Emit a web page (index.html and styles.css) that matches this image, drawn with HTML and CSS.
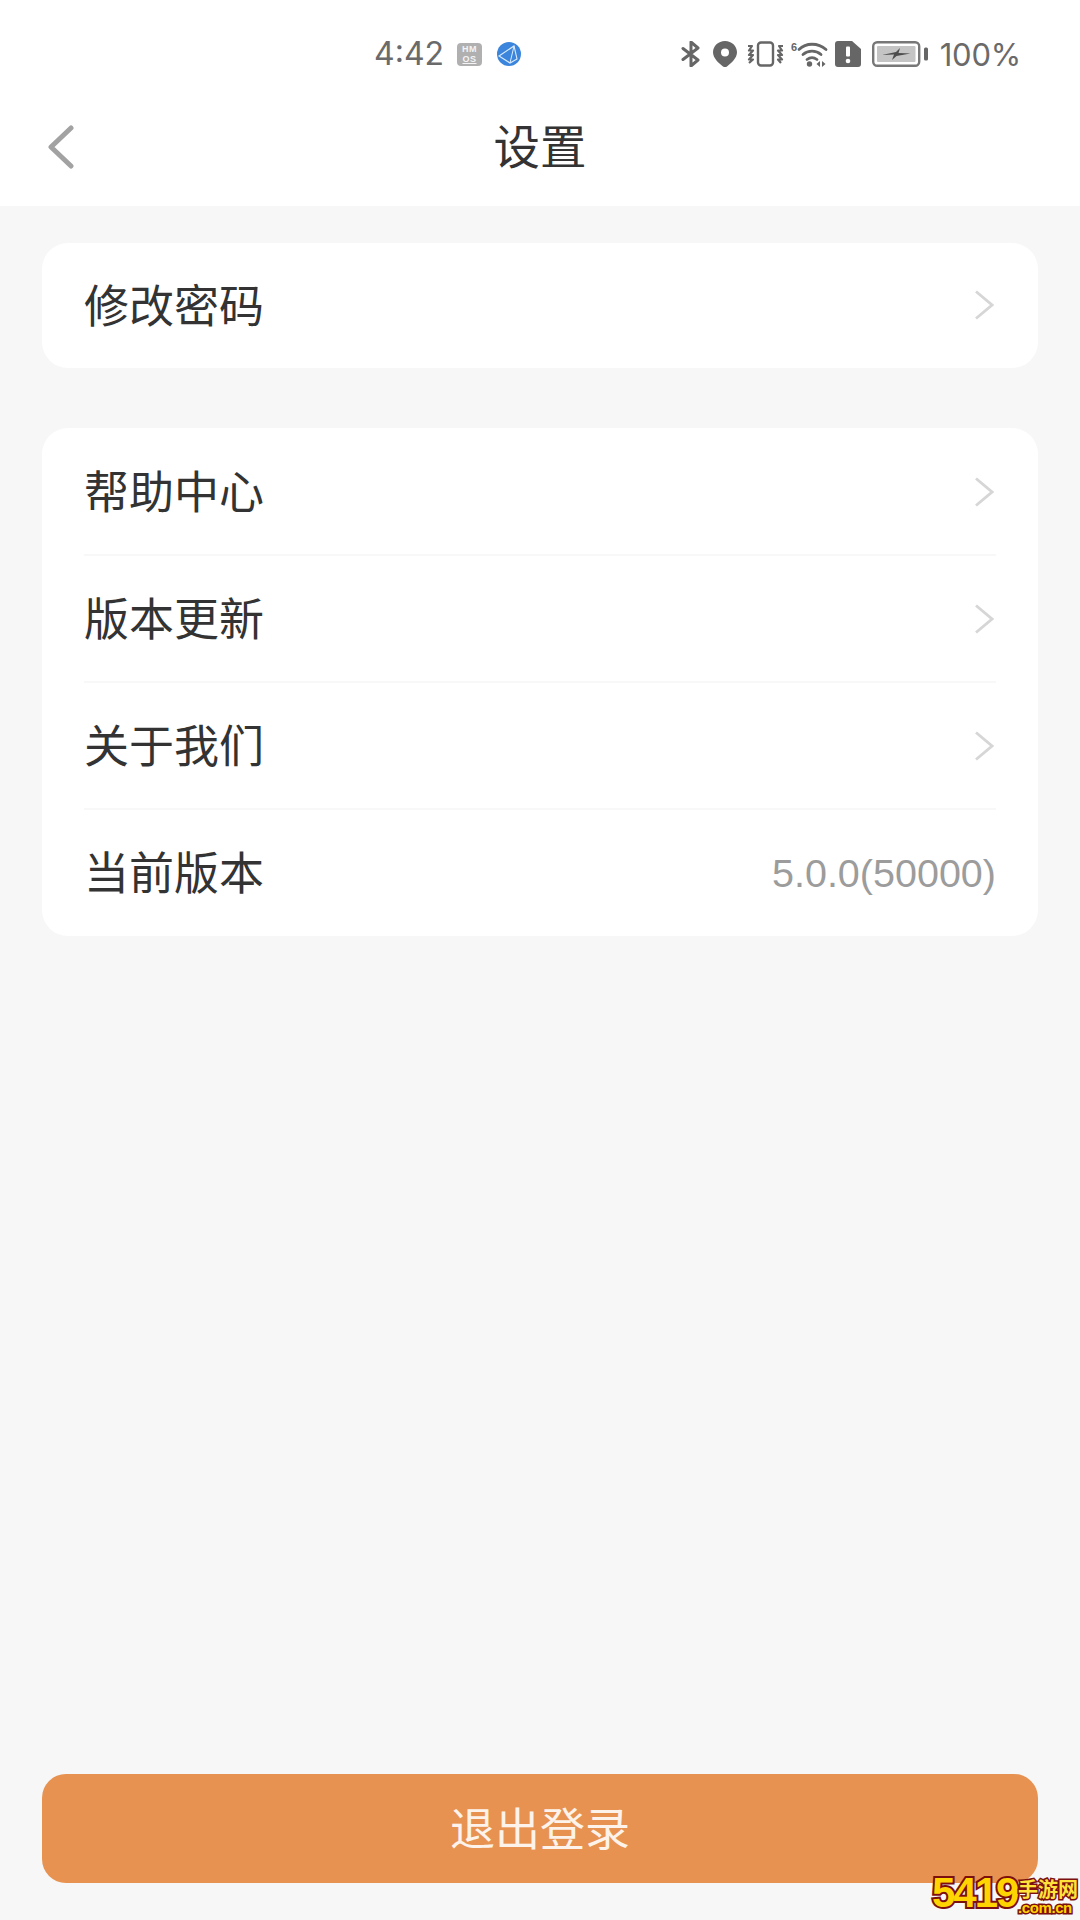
FILE: index.html
```html
<!DOCTYPE html>
<html lang="zh-CN">
<head>
<meta charset="utf-8">
<title>设置</title>
<link rel="stylesheet" href="styles.css">
</head>
<body>
<div class="page">
  <header class="top">
    <div class="status">
      <div class="status-left">
        <span class="clock">4:42</span>
        <span class="hmos"><span>HM</span><span class="hmos-os">OS</span></span>
        <svg class="ic-net" viewBox="0 0 24 24"><circle cx="12" cy="12" r="12" fill="#3b86dc"/><path d="M2 14 17 4l3 13-7 4Z" fill="none" stroke="#dcebfa" stroke-width="1.100"/><path d="M17 4 13 21" stroke="#dcebfa" stroke-width="1"/></svg>
      </div>
      <div class="status-right">
        <svg class="ic-bt" viewBox="0 0 20 26"><path d="M2 7.500 17 19l-7 6V1l7 6L2 18.500" fill="none" stroke="#666" stroke-width="3" stroke-linejoin="round" stroke-linecap="round"/></svg>
        <svg class="ic-pin" viewBox="0 0 24 26"><path fill-rule="evenodd" d="M12 0c6.800 0 12 5 12 11.300 0 5.700-5.500 10.900-10 14.100-1.200.8-2.800.8-4 0C5.500 22.200 0 17 0 11.300 0 5 5.200 0 12 0Zm0 7.500a4 4 0 1 0 0 8 4 4 0 0 0 0-8Z" fill="#666"/></svg>
        <svg class="ic-vib" viewBox="0 0 37 26"><rect x="11" y="1.500" width="15" height="23" rx="3" fill="none" stroke="#666" stroke-width="2.400"/><path d="M1 5h4L2 9.500h4L2 14h4l-4 4.500h4l-4 3.500M36 5h-4l3 4.500h-4l4 4.500h-4l4 4.500h-4l3 3.500" fill="none" stroke="#666" stroke-width="2.200" stroke-linejoin="round"/></svg>
        <svg class="ic-wifi" viewBox="0 0 37 26"><text x="0" y="10" class="wifi-six">6</text><path d="M8 8.500C15 1.500 27 1.500 35 8.500M12 13.500c5-4.500 13-4.500 18 0M16 18.500c3-2.300 7-2.300 10 0" fill="none" stroke="#666" stroke-width="2.800" stroke-linecap="round"/><circle cx="18.500" cy="23" r="2.700" fill="#666"/><path d="M29 20v6l-3.500-3ZM31 20v6l3.500-3Z" fill="#666"/></svg>
        <svg class="ic-sim" viewBox="0 0 26 26"><path d="M3 0h14l9 8v15a3 3 0 0 1-3 3H3a3 3 0 0 1-3-3V3a3 3 0 0 1 3-3Z" fill="#666"/><rect x="11" y="5.500" width="4" height="10" rx="1" fill="#fff"/><circle cx="13" cy="20" r="2.300" fill="#fff"/></svg>
        <svg class="ic-bat" viewBox="0 0 57 26"><rect x="1.200" y="1.200" width="46" height="23.600" rx="4" fill="none" stroke="#777" stroke-width="2.400"/><rect x="5" y="5" width="38.500" height="16" rx="1" fill="#c4c4c4"/><path d="M10 14 24 11l4-4-1.500 5 12 .5-14 2.500-4.500 4 2-5.500Z" fill="#4c4c4c"/><rect x="52" y="6.500" width="4" height="13" rx="1.500" fill="#666"/></svg>
        <span class="pct">100%</span>
      </div>
    </div>
    <nav class="bar">
      <svg class="back" viewBox="0 0 28 44"><path d="M25 3 5 22l20 19" fill="none" stroke="#a2a2a2" stroke-width="5" stroke-linecap="round" stroke-linejoin="round"/></svg>
      <h1 class="title">设置</h1>
    </nav>
  </header>

  <main class="content">
    <section class="card">
      <div class="row row-single"><span class="label">修改密码</span><svg class="more" viewBox="0 0 20 30"><path d="M2 1.500 18 15 2 28.500" fill="none" stroke="#d6d6d6" stroke-width="2.800"/></svg></div>
    </section>
    <section class="card card-list">
      <div class="row"><span class="label">帮助中心</span><svg class="more" viewBox="0 0 20 30"><path d="M2 1.500 18 15 2 28.500" fill="none" stroke="#d6d6d6" stroke-width="2.800"/></svg></div>
      <div class="row"><span class="label">版本更新</span><svg class="more" viewBox="0 0 20 30"><path d="M2 1.500 18 15 2 28.500" fill="none" stroke="#d6d6d6" stroke-width="2.800"/></svg></div>
      <div class="row"><span class="label">关于我们</span><svg class="more" viewBox="0 0 20 30"><path d="M2 1.500 18 15 2 28.500" fill="none" stroke="#d6d6d6" stroke-width="2.800"/></svg></div>
      <div class="row"><span class="label">当前版本</span><span class="version">5.0.0(50000)</span></div>
    </section>
  </main>

  <button class="logout" type="button"><span class="logout-text">退出登录</span></button>

  <div class="stamp">
    <span class="stamp-num">5419</span>
    <span class="stamp-site"><span class="stamp-cn">手游网</span><span class="stamp-url">.com.cn</span></span>
  </div>
</div>
</body>
</html>
```
FILE: styles.css
```css
* { box-sizing: border-box; }

html, body { margin: 0; padding: 0; }

body {
  font-family: "Noto Sans CJK SC", "Liberation Sans", sans-serif;
  color: #333;
}

.page {
  position: relative;
  width: 1080px;
  height: 1920px;
  background: #f7f7f7;
  display: flex;
  flex-direction: column;
  overflow: hidden;
}

/* status bar and title bar share the white header */
.top {
  background: #fff;
  height: 206px;
  flex: none;
}

.status {
  height: 108px;
  display: flex;
  align-items: center;
  justify-content: space-between;
  padding: 0 59px 0 374px;
}

.status-left, .status-right { display: flex; align-items: center; }

.clock {
  font: 32px/1 Inter, "Liberation Sans", sans-serif;
  color: #6a6a6a;
  width: 83px;
}

.hmos {
  width: 25px;
  height: 23px;
  border-radius: 4px;
  background: #b0b0b0;
  color: #f4f4f4;
  font: 700 9px/10px "Liberation Sans", sans-serif;
  letter-spacing: 0.5px;
  display: flex;
  flex-direction: column;
  align-items: center;
  justify-content: center;
}

.hmos-os { text-decoration: underline; text-underline-offset: 1px; }

.ic-net { width: 24px; height: 24px; margin-left: 15px; }

.status-right svg { height: 26px; display: block; }

.ic-bt { width: 20px; margin-right: 12px; }
.ic-pin { width: 24px; margin-right: 10px; }
.ic-vib { width: 37px; margin-right: 7px; }
.ic-wifi { width: 37px; margin-right: 7px; }
.ic-sim { width: 26px; margin-right: 11px; }
.ic-bat { width: 57px; margin-right: 11px; }

.wifi-six { font: 700 11px "Liberation Sans", sans-serif; fill: #666; }

.pct {
  font: 31px/1 Inter, "Liberation Sans", sans-serif;
  letter-spacing: -0.2px;
  color: #6a6a6a;
}

.bar {
  position: relative;
  height: 78px;
  display: flex;
  align-items: center;
  justify-content: center;
}

.back {
  position: absolute;
  left: 46px;
  top: 17px;
  width: 28px;
  height: 44px;
}

.title {
  margin: 0 0 6px;
  font-size: 46.500px;
  font-weight: 400;
  line-height: 72px;
  color: #333;
}

.content {
  flex: 1;
  padding: 37px 42px 0;
  display: flex;
  flex-direction: column;
  gap: 60px;
}

.card {
  background: #fff;
  border-radius: 26px;
  padding: 0 42px;
}

.card-list { padding-top: 1px; }

.row {
  height: 127px;
  display: flex;
  align-items: center;
  justify-content: space-between;
  font-size: 45px;
  color: #333;
  border-bottom: 2px solid #f8f8f8;
}

.row:last-child { border-bottom: 0; height: 126px; }

.row-single:last-child { height: 125px; }

.row-single .more { margin-bottom: 2px; }

/* the CJK face sits low in its line box, so lift the labels */
.label { line-height: 1; padding-bottom: 5px; }

.more { width: 20px; height: 30px; margin-right: 2px; }

.version {
  font: 39.500px/1 "Liberation Sans", sans-serif;
  color: #9c9c9c;
  padding-top: 2px;
}

.logout {
  flex: none;
  width: 996px;
  height: 109px;
  margin: 0 42px 37px;
  padding: 0;
  border: 0;
  border-radius: 24px;
  background: #e79251;
  color: #fdf3ea;
  font: 400 45px/1 "Noto Sans CJK SC", sans-serif;
}

.logout-text { display: block; padding-bottom: 4px; }

/* site stamp in the lower right corner */
.stamp {
  position: absolute;
  left: 930px;
  top: 1868px;
  width: 150px;
  height: 48px;
  display: flex;
  align-items: flex-end;
  color: #ffd400;
  font-family: "Liberation Sans", sans-serif;
  font-weight: 700;
  paint-order: stroke fill;
  -webkit-text-stroke: 4px #7c0f0f;
}

.stamp-num {
  width: 88px;
  padding-left: 2px;
  font-size: 42px;
  line-height: 46px;
  letter-spacing: -2px;
  white-space: nowrap;
}

.stamp-site {
  width: 62px;
  display: flex;
  flex-direction: column;
  -webkit-text-stroke-width: 3px;
}

.stamp-cn {
  font-family: "Noto Sans CJK SC", sans-serif;
  font-size: 20px;
  line-height: 22px;
  color: #ffe23a;
}

.stamp-url {
  white-space: nowrap;
  font-size: 15px;
  line-height: 16px;
  letter-spacing: -0.4px;
}
```
